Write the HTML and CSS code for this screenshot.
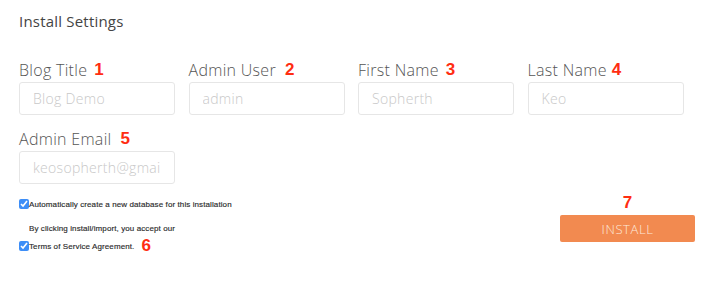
FILE: index.html
```html
<!DOCTYPE html>
<html lang="en">
<head>
    <meta charset="UTF-8">
    <meta name="viewport" content="width=device-width, initial-scale=1.0">
    <title>Install Settings</title>
    <link rel="stylesheet" href="styles.css">
</head>
<body>
    <div class="page">
        <h2 class="page-title">Install Settings</h2>

        <div class="fields">
            <div class="field">
                <label>Blog Title<span class="step mid">1</span></label>
                <input type="text" placeholder="Blog Demo">
            </div>
            <div class="field">
                <label>Admin User<span class="step far">2</span></label>
                <input type="text" placeholder="admin">
            </div>
            <div class="field">
                <label>First Name<span class="step mid">3</span></label>
                <input type="text" placeholder="Sopherth">
            </div>
            <div class="field">
                <label>Last Name<span class="step near">4</span></label>
                <input type="text" placeholder="Keo">
            </div>
            <div class="field">
                <label>Admin Email<span class="step far">5</span></label>
                <input type="text" placeholder="keosopherth@gmail.com">
            </div>
        </div>

        <div class="footer">
            <div class="agree">
                <div class="check-row">
                    <input type="checkbox" checked>
                    <span>Automatically create a new database for this installation</span>
                </div>
                <p class="note">By clicking install/import, you accept our</p>
                <div class="check-row">
                    <input type="checkbox" checked>
                    <span>Terms of Service Agreement.</span>
                    <span class="step">6</span>
                </div>
            </div>
            <div class="action">
                <span class="step">7</span>
                <button class="install-button">INSTALL</button>
            </div>
        </div>
    </div>
</body>
</html>
```

FILE: styles.css
```css
body {
    margin: 0;
    background: #ffffff;
    font-family: "Open Sans", sans-serif;
    color: #555;
}
.page {
    padding: 11px 19px;
}
.page-title {
    margin: 0;
    font-size: 15px;
    font-weight: 400;
    letter-spacing: 0.2px;
    color: #444;
}
.fields {
    display: grid;
    grid-template-columns: repeat(4, 156px);
    column-gap: 13.5px;
    row-gap: 14px;
    margin-top: 29px;
}
.field label {
    display: flex;
    align-items: center;
    height: 20px;
    font-size: 16px;
    font-weight: 300;
    letter-spacing: 0.3px;
    color: #555;
}
.field input {
    box-sizing: border-box;
    width: 156px;
    height: 33px;
    margin-top: 2px;
    padding: 0 13px;
    border: 1px solid #e6e6e6;
    border-radius: 3px;
    font-family: inherit;
    font-size: 14px;
    font-weight: 300;
    letter-spacing: 0.3px;
}
.field input::placeholder {
    color: #c8c8c8;
}
.step {
    font-family: "Liberation Sans", Arial, sans-serif;
    font-weight: bold;
    font-size: 17px;
    letter-spacing: 0;
    color: #ff2d12;
}
.step.near { margin-left: 5px; }
.step.mid { margin-left: 7px; }
.step.far { margin-left: 9px; }
.footer {
    display: flex;
    justify-content: space-between;
    align-items: flex-start;
    margin-top: 9px;
}
.agree {
    padding-top: 6px;
}
.check-row,
.note {
    font-family: "Liberation Sans", Arial, sans-serif;
    font-size: 8px;
    letter-spacing: 0.1px;
    color: #2b2b2b;
    -webkit-text-stroke: 0.15px #2b2b2b;
}
.check-row {
    display: flex;
    align-items: center;
}
.check-row input {
    width: 10px;
    height: 10px;
    margin: 0;
    accent-color: #3d8ef7;
}
.check-row .step {
    margin-left: 7px;
    -webkit-text-stroke: 0;
    letter-spacing: 0;
}
.note {
    margin: 15px 0 3px 10px;
}
.action {
    display: flex;
    flex-direction: column;
    align-items: center;
    margin-right: 4px;
}
.install-button {
    width: 135px;
    height: 27px;
    margin-top: 2px;
    border: none;
    border-radius: 2px;
    background: #f28a50;
    color: #fde8da;
    font-family: "Open Sans", sans-serif;
    font-size: 13px;
    font-weight: 300;
    letter-spacing: 0.6px;
}
```
